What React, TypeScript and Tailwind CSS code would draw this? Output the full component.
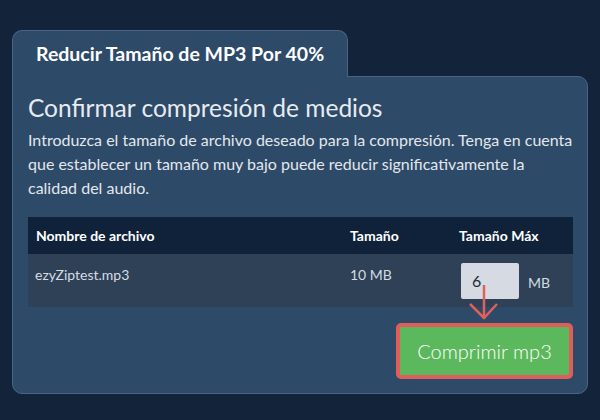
export default function App() {
  return (
    <div className="h-[420px] w-[600px] overflow-hidden bg-[#12233a] px-[12px] pt-[30px] font-['Lato','Liberation_Sans',sans-serif] text-[#e6e9ee]">
      <div className="relative z-10 -mb-px flex h-[47px] w-[336px] items-center rounded-t-[10px] border border-b-0 border-[#4a6584] bg-[#2d4a69] pl-[23px]">
        <h2 className="text-[19.5px] font-bold text-white">Reducir Tamaño de MP3 Por 40%</h2>
      </div>
      <div className="h-[318px] rounded-b-[10px] rounded-tr-[10px] border border-[#4a6584] bg-[#2d4a69] pl-[15px] pr-[14px] pt-[15px]">
        <h3 className="text-[24.5px] leading-[32px] text-[#e8ebef]">Confirmar compresión de medios</h3>
        <p className="mt-[4px] text-[16px] leading-[24px] text-[#e3e7ec]">
          Introduzca el tamaño de archivo deseado para la compresión. Tenga en cuenta que establecer un tamaño muy bajo puede reducir significativamente la calidad del audio.
        </p>
        <div className="mt-[17px]">
          <div className="flex h-[37px] items-center bg-[#10223a] text-[14px] font-bold text-white">
            <div className="w-[322px] pl-[8px]">Nombre de archivo</div>
            <div className="w-[109px]">Tamaño</div>
            <div>Tamaño Máx</div>
          </div>
          <div className="flex h-[53px] bg-[#2e4157] text-[14px] text-[#d6dbe2]">
            <div className="w-[322px] pl-[7px] pt-[10px]">ezyZiptest.mp3</div>
            <div className="w-[111px] pt-[10px]">10 MB</div>
            <div className="relative flex items-start pt-[9px]">
              <div className="flex h-[36px] w-[58px] items-center rounded-[2px] bg-[#d6dbe3] pl-[11px] text-[16px] text-[#1f2937]">6</div>
              <span className="ml-[9px] pt-[9px] text-[#d6dbe2]">MB</span>
              <svg className="absolute left-[7px] top-[31px]" width="30" height="36" viewBox="0 0 30 36">
                <path d="M16 0 V34" stroke="#e0605a" strokeWidth="2.5" fill="none" />
                <path d="M2 19 L16 33 L29 19" stroke="#e0605a" strokeWidth="2.5" fill="none" />
              </svg>
            </div>
          </div>
        </div>
        <div className="mt-[16px] flex justify-end">
          <button className="h-[56px] w-[177px] rounded-[5px] border-[4px] border-[#e05d5a] bg-[#5cb85c] text-[20px] font-light text-white">
            Comprimir mp3
          </button>
        </div>
      </div>
    </div>
  );
}
